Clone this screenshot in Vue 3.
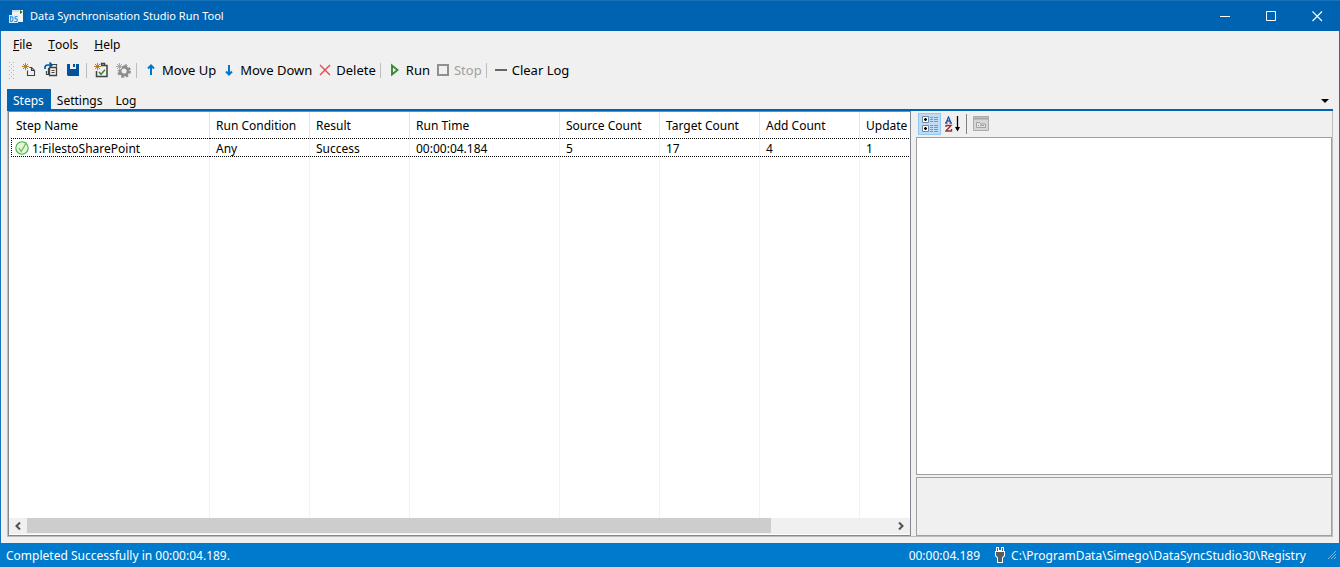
<script setup>
import { ref } from 'vue'

const tabs = ['Steps', 'Settings', 'Log']
const activeTab = ref('Steps')

const menus = [
  { key: 'F', rest: 'ile' },
  { key: 'T', rest: 'ools' },
  { key: 'H', rest: 'elp' },
]

const columns = [
  { label: 'Step Name', size: 'wide' },
  { label: 'Run Condition', size: 'narrow' },
  { label: 'Result', size: 'narrow' },
  { label: 'Run Time', size: 'medium' },
  { label: 'Source Count', size: 'narrow' },
  { label: 'Target Count', size: 'narrow' },
  { label: 'Add Count', size: 'narrow' },
  { label: 'Update', size: 'narrow' },
]

const step = ['1:FilestoSharePoint', 'Any', 'Success', '00:00:04.184', '5', '17', '4', '1']
</script>

<template>
  <div class="window">
    <header class="titlebar">
      <svg class="app-icon" width="16" height="16" viewBox="0 0 16 16" aria-hidden="true">
        <path d="M4 2h11v12H4z" fill="#f2f2f2" />
        <path d="M4 2h7v2H4z" fill="#d5dbe0" />
        <path d="M11 2h4v4h-4z" fill="#e4f3e4" />
        <path d="M12 2l2.500 2L12 6z" fill="#1c6b2c" />
        <path d="M1 7h9v8H1z" fill="#d9efff" />
        <path d="M2.500 8.500v5h.5q2 0 2-2.500t-2-2.500zM9.500 8.500H8q-1.200.2-1 1.300t1.300 1 .9 1.600-1.200 1.100H6" fill="none" stroke="#3b97dc" stroke-width="1.200" />
      </svg>
      <h1 class="title">Data Synchronisation Studio Run Tool</h1>
      <div class="controls">
        <button type="button" aria-label="Minimize">
          <svg width="11" height="11" viewBox="0 0 11 11"><path d="M0 5.500h10" stroke="#fff" /></svg>
        </button>
        <button type="button" aria-label="Maximize">
          <svg width="11" height="11" viewBox="0 0 11 11"><path d="M.5.5h9v9h-9z" fill="none" stroke="#fff" /></svg>
        </button>
        <button type="button" aria-label="Close">
          <svg width="11" height="11" viewBox="0 0 11 11"><path d="M.5.5l9.500 9.500M10 .5L.5 10" stroke="#fff" stroke-width="1.100" /></svg>
        </button>
      </div>
    </header>

    <div class="client">
      <nav class="menubar">
        <button v-for="m in menus" :key="m.key" type="button"><u>{{ m.key }}</u>{{ m.rest }}</button>
      </nav>

      <div class="toolbar">
        <svg class="grip" width="5" height="17" viewBox="0 0 5 17" aria-hidden="true">
          <g fill="#b4b4b4">
            <template v-for="i in 5" :key="i">
              <rect x="0" :y="(i - 1) * 4" width="1" height="1" />
              <rect x="4" :y="(i - 1) * 4" width="1" height="1" />
              <rect v-if="i < 5" x="2" :y="(i - 1) * 4 + 2" width="1" height="1" />
            </template>
          </g>
        </svg>
        <button type="button" class="icon-btn" aria-label="New">
          <svg width="16" height="16" viewBox="0 0 16 16">
            <path d="M8.500 5.500h2l3 3v5h-7v-5M10.500 5.500v3h3" fill="none" stroke="#424242" stroke-width="1.100" />
            <path d="M4.500 1v7M1 4.500h7M2 2l5 5M7 2L2 7" stroke="#c27d1a" />
          </svg>
        </button>
        <button type="button" class="icon-btn" aria-label="Open">
          <svg width="16" height="16" viewBox="0 0 16 16">
            <path d="M9 2.500h4.500v2M3.500 9v3.500h2v-6h3" fill="none" stroke="#424242" stroke-width="1.200" />
            <path d="M6.500 5.500h7v8h-7z" fill="#f0f0f0" stroke="#424242" stroke-width="1.300" />
            <path d="M8.500 8.500h3M8.500 10.500h3" fill="none" stroke="#424242" />
            <path d="M2 7Q1.500 3 5 3h3M6.500.5L9 3 6.500 5.500" fill="none" stroke="#00539c" stroke-width="1.600" />
          </svg>
        </button>
        <button type="button" class="icon-btn" aria-label="Save">
          <svg width="16" height="16" viewBox="0 0 16 16">
            <path d="M2 2h12v12H3l-1-1z" fill="#00539c" />
            <path d="M5 2h6v5H5z" fill="#f0f0f0" />
            <path d="M8 2h2v3H8z" fill="#00539c" />
          </svg>
        </button>
        <span class="separator"></span>
        <button type="button" class="icon-btn" aria-label="Add step">
          <svg width="16" height="16" viewBox="0 0 16 16">
            <path d="M10 3.500h4v11H3.500V9M8 3.500h5M8.500 3V1.500h3V3" fill="none" stroke="#424242" stroke-width="1.500" />
            <path d="M6 10l2 2.300 4-4.500" fill="none" stroke="#388a34" stroke-width="1.500" />
            <path d="M4.500 1v7M1 4.500h7M2 2l5 5M7 2L2 7" stroke="#c27d1a" />
          </svg>
        </button>
        <button type="button" class="icon-btn" disabled aria-label="Step options">
          <svg width="16" height="16" viewBox="0 0 16 16">
            <circle cx="9" cy="9" r="4" fill="none" stroke="#8c8c8c" stroke-width="2.800" />
            <circle cx="9" cy="9" r="5.800" fill="none" stroke="#8c8c8c" stroke-width="2.200" stroke-dasharray="2.500 2.055" />
            <path d="M0 0h8v4L5 8H0z" fill="#f0f0f0" />
            <path d="M4.500 1v7M1 4.500h7M2 2l5 5M7 2L2 7" stroke="#a8a8a8" />
          </svg>
        </button>
        <span class="separator"></span>
        <button type="button" class="text-btn">
          <svg width="16" height="16" viewBox="0 0 16 16"><path d="M8 13V4M5 6.500l3-3 3 3" fill="none" stroke="#0078ca" stroke-width="2" /></svg>
          <span>Move Up</span>
        </button>
        <button type="button" class="text-btn">
          <svg width="16" height="16" viewBox="0 0 16 16"><path d="M8 3v9M5 9.500l3 3 3-3" fill="none" stroke="#0078ca" stroke-width="2" /></svg>
          <span>Move Down</span>
        </button>
        <button type="button" class="text-btn">
          <svg width="16" height="16" viewBox="0 0 16 16"><path d="M3 3l10 10M13 3L3 13" stroke="#e5484a" stroke-width="1.400" /></svg>
          <span>Delete</span>
        </button>
        <span class="separator"></span>
        <button type="button" class="text-btn">
          <svg width="16" height="16" viewBox="0 0 16 16"><path d="M5 3.500v9L10.500 8z" fill="none" stroke="#388a34" stroke-width="1.900" /></svg>
          <span>Run</span>
        </button>
        <button type="button" class="text-btn" disabled>
          <svg width="16" height="16" viewBox="0 0 16 16"><path d="M3 3h10v10H3z" fill="none" stroke="#8f8f8f" stroke-width="2" /></svg>
          <span>Stop</span>
        </button>
        <span class="separator"></span>
        <button type="button" class="text-btn">
          <svg width="16" height="16" viewBox="0 0 16 16"><path d="M2 8h12" stroke="#5f686b" stroke-width="2" /></svg>
          <span>Clear Log</span>
        </button>
      </div>

      <div class="tabstrip">
        <div class="tabs" role="tablist">
          <button
            v-for="t in tabs"
            :key="t"
            type="button"
            role="tab"
            :aria-selected="t === activeTab"
            :class="{ active: t === activeTab }"
            @click="activeTab = t"
          >{{ t }}</button>
        </div>
        <button type="button" class="tab-menu" aria-label="Tab list">
          <svg width="8" height="4" viewBox="0 0 8 4"><path d="M0 0h8L4 4z" fill="#000" /></svg>
        </button>
      </div>

      <main class="content">
        <section class="list">
          <div class="viewport">
            <table>
              <colgroup>
                <col v-for="c in columns" :key="c.label" :class="c.size" />
              </colgroup>
              <thead>
                <tr><th v-for="c in columns" :key="c.label" scope="col">{{ c.label }}</th></tr>
              </thead>
              <tbody>
                <tr class="step">
                  <td v-for="(value, i) in step" :key="i">
                    <div v-if="i === 0" class="step-name">
                      <svg width="16" height="16" viewBox="0 0 16 16" aria-hidden="true">
                        <circle cx="8" cy="8" r="6.200" fill="#e2f7dc" stroke="#3fae49" stroke-width="1.100" />
                        <path d="M5 8l2.200 3.500L12.500 2.500" fill="none" stroke="#7cc04a" stroke-width="1.400" />
                      </svg>
                      <span>{{ value }}</span>
                    </div>
                    <template v-else>{{ value }}</template>
                  </td>
                </tr>
                <tr class="filler" aria-hidden="true"><td v-for="c in columns" :key="c.label"></td></tr>
              </tbody>
            </table>
          </div>
          <div class="scrollbar">
            <button type="button" aria-label="Scroll left">
              <svg width="8" height="8" viewBox="0 0 8 8"><path d="M6 .5L2.500 4 6 7.500" fill="none" stroke="#505050" stroke-width="2" /></svg>
            </button>
            <div class="track"><div class="thumb"></div></div>
            <button type="button" aria-label="Scroll right">
              <svg width="8" height="8" viewBox="0 0 8 8"><path d="M2 .5L5.500 4 2 7.500" fill="none" stroke="#505050" stroke-width="2" /></svg>
            </button>
          </div>
        </section>

        <aside class="properties">
          <div class="prop-tools">
            <button type="button" class="pressed" aria-label="Categorized">
              <svg width="16" height="16" viewBox="0 0 16 16">
                <path d="M.5.5h6v6h-6zM.5 9.500h6v6h-6z" fill="#fff" stroke="#7088a8" />
                <path d="M2 3.500h3M3.500 2v3M2 12.500h3M3.500 11v3" stroke="#000" stroke-width="1.400" />
                <path d="M8 1.500h3M12 1.500h4M8 3.500h3M12 3.500h4M8 5.500h3M12 5.500h4M8 9.500h3M12 9.500h4M8 11.500h3M12 11.500h4M8 13.500h3M12 13.500h4M8 15.500h3M12 15.500h4" stroke="#7d96b5" />
              </svg>
            </button>
            <button type="button" aria-label="Alphabetical">
              <svg width="16" height="16" viewBox="0 0 16 16">
                <path d="M1 7L3.500 1 6 7M2 5h3.500M0 7h2.500M4.500 7H7" fill="none" stroke="#2b5797" stroke-width="1.300" />
                <path d="M1 9.500h5L1 15h5.500v-2M1 9v2" fill="none" stroke="#9c3037" stroke-width="1.400" />
                <path d="M12.500 0v14" stroke="#000" stroke-width="1.300" />
                <path d="M10 11h5l-2.500 4.500z" fill="#000" />
              </svg>
            </button>
            <span class="prop-separator"></span>
            <button type="button" disabled aria-label="Property pages">
              <svg width="16" height="16" viewBox="0 0 16 16">
                <path d="M.5.5h15v14H.5z" fill="#d6d6d6" stroke="#ababab" />
                <path d="M1 2.500h14" stroke="#a6a6a6" stroke-width="2" />
                <path d="M3.500 11.500v-5h3l1 1.500h5v3.500z" fill="#e4e4e4" stroke="#a0a0a0" />
                <path d="M5 9.500h1M7 9.500h4" stroke="#a0a0a0" />
              </svg>
            </button>
          </div>
          <div class="prop-grid"></div>
          <div class="prop-help"></div>
        </aside>
      </main>
    </div>

    <footer class="statusbar">
      <span class="message">Completed Successfully in 00:00:04.189.</span>
      <span class="elapsed">00:00:04.189</span>
      <svg class="plug" width="16" height="16" viewBox="0 0 16 16" aria-hidden="true">
        <path d="M4 0h3v3h2V0h3v4h1v5l-2 2v5H5v-5L3 9V4h1z" fill="#fff" />
        <path d="M5 1h1v3H5zM10 1h1v3h-1zM4 5h8v3.500l-2 2V15H6v-4.500l-2-2z" fill="#555c60" />
      </svg>
      <span class="path">C:\ProgramData\Simego\DataSyncStudio30\Registry</span>
      <svg class="size-grip" width="8" height="8" viewBox="0 0 8 8" aria-hidden="true">
        <path d="M0 8l8-8M3 8l5-5M6 8l2-2" stroke="#8cb4d6" />
      </svg>
    </footer>
  </div>
</template>

<style>
html,
body,
#app {
  height: 100%;
}
body {
  margin: 0;
}
</style>

<style scoped>
.window {
  display: flex;
  flex-direction: column;
  height: 100%;
  box-sizing: border-box;
  overflow: hidden;
  background: #f0f0f0;
  color: #000;
  font-family: "Noto Sans", "Open Sans", sans-serif;
  font-size: 12px;
  line-height: 16px;
}
button {
  display: flex;
  align-items: center;
  margin: 0;
  padding: 0;
  border: 0;
  background: none;
  color: inherit;
  font: inherit;
  white-space: nowrap;
}
svg {
  display: block;
  flex: none;
}
.titlebar {
  display: flex;
  align-items: center;
  flex: none;
  height: 31px;
  box-sizing: border-box;
  padding-left: 8px;
  border-top: 1px solid #1a73ba;
  background: #0063b1;
  color: #fff;
}
.title {
  flex: 1;
  margin: 0 0 0 6px;
  font-size: 11px;
  font-weight: 400;
}
.controls {
  display: flex;
  align-self: stretch;
}
.controls button {
  justify-content: center;
  width: 46px;
}
.client {
  display: flex;
  flex: 1;
  flex-direction: column;
  min-height: 0;
  padding: 0 6px 6px;
  border: solid #1a73ba;
  border-width: 0 1px;
}
.menubar {
  display: flex;
  flex: none;
  gap: 16px;
  box-sizing: border-box;
  height: 26px;
  padding: 2px 0 0 6px;
}
.toolbar {
  display: flex;
  align-items: center;
  flex: none;
  height: 26px;
}
.grip {
  margin: 0 4px 0 2px;
}
.icon-btn {
  justify-content: center;
  width: 22px;
}
.separator {
  width: 1px;
  height: 15px;
  margin: 0 3px 0 2px;
  background: #bdbdbd;
}
.text-btn {
  gap: 3px;
  padding: 0 2px 0 3px;
  font-size: 13px;
}
.text-btn:disabled {
  color: #a0a0a0;
}
.tabstrip {
  display: flex;
  justify-content: space-between;
  flex: none;
  margin-top: 6px;
  border-bottom: 2px solid #0063b1;
}
.tabs {
  display: flex;
}
.tabs button {
  height: 20px;
  padding: 3px 7px 0 6px;
}
.tabs .active {
  background: #0063b1;
  color: #fff;
}
.tab-menu {
  padding: 3px 4px 0 0;
}
.content {
  display: grid;
  flex: 1;
  grid-template-columns: minmax(0, 903fr) minmax(0, 416fr);
  gap: 5px;
  min-height: 0;
  border: 1px solid #bcbcbc;
  border-top: 0;
}
.list {
  display: flex;
  flex-direction: column;
  min-width: 0;
  padding-bottom: 1px;
  border: 1px solid #828790;
  background: #fff;
}
.viewport {
  flex: 1;
  min-height: 0;
  overflow: hidden;
}
table {
  width: 951px;
  height: 100%;
  border-spacing: 0;
  table-layout: fixed;
}
.wide {
  width: 201px;
}
.medium {
  width: 150px;
}
.narrow {
  width: 100px;
}
th,
td {
  height: 19px;
  box-sizing: border-box;
  padding: 2px 0 0 6px;
  background: linear-gradient(#edf3fa, #edf3fa) right / 1px 100% no-repeat;
  text-align: left;
  font-weight: 400;
  white-space: nowrap;
}
th {
  height: 26px;
  background-image: linear-gradient(#e3e3e3, #e3e3e3);
}
th:first-child {
  padding-left: 7px;
}
.step td {
  background:
    repeating-linear-gradient(90deg, #000 0 1px, transparent 1px 2px) top / 100% 1px no-repeat,
    repeating-linear-gradient(90deg, #000 0 1px, transparent 1px 2px) bottom / 100% 1px no-repeat,
    linear-gradient(#edf3fa, #edf3fa) right / 1px 100% no-repeat;
}
.step td:first-child {
  padding: 0 0 0 2px;
  background: linear-gradient(#edf3fa, #edf3fa) right / 1px 100% no-repeat;
}
.step-name {
  display: flex;
  align-items: center;
  gap: 2px;
  box-sizing: border-box;
  height: 19px;
  padding-left: 3px;
  background:
    repeating-linear-gradient(90deg, #000 0 1px, transparent 1px 2px) top / 100% 1px no-repeat,
    repeating-linear-gradient(90deg, #000 0 1px, transparent 1px 2px) bottom / 100% 1px no-repeat,
    repeating-linear-gradient(180deg, #000 0 1px, transparent 1px 2px) left / 1px 100% no-repeat;
}
.step-name span {
  padding-top: 2px;
}
.filler td {
  height: auto;
}
.scrollbar {
  display: flex;
  flex: none;
  height: 16px;
  background: #f0f0f0;
}
.scrollbar button {
  justify-content: center;
  width: 18px;
}
.track {
  flex: 1;
}
.thumb {
  width: 86%;
  height: 15px;
  background: #cdcdcd;
}
.properties {
  display: flex;
  flex-direction: column;
  gap: 2px;
  min-width: 0;
}
.prop-tools {
  display: flex;
  align-items: center;
  box-sizing: border-box;
  height: 24px;
  padding: 1px 0 0 2px;
}
.prop-tools button {
  justify-content: center;
  width: 23px;
  height: 22px;
}
.prop-tools .pressed {
  box-sizing: border-box;
  border: 1px solid #90c8f6;
  background: #c0dcf3;
}
.prop-separator {
  width: 1px;
  height: 20px;
  margin: 0 2px;
  background: #808080;
}
.prop-grid {
  flex: 1;
  border: 1px solid #a0a0a0;
  background: #fff;
}
.prop-help {
  height: 57px;
  border: 1px solid #a0a0a0;
}
.statusbar {
  display: flex;
  align-items: center;
  flex: none;
  height: 24px;
  padding: 0 4px 0 6px;
  background: #007acc;
  color: #fff;
}
.statusbar span {
  padding-top: 1px;
}
.message {
  flex: 1;
}
.plug {
  margin: 0 3px 0 12px;
}
.size-grip {
  margin-left: 22px;
}
</style>
